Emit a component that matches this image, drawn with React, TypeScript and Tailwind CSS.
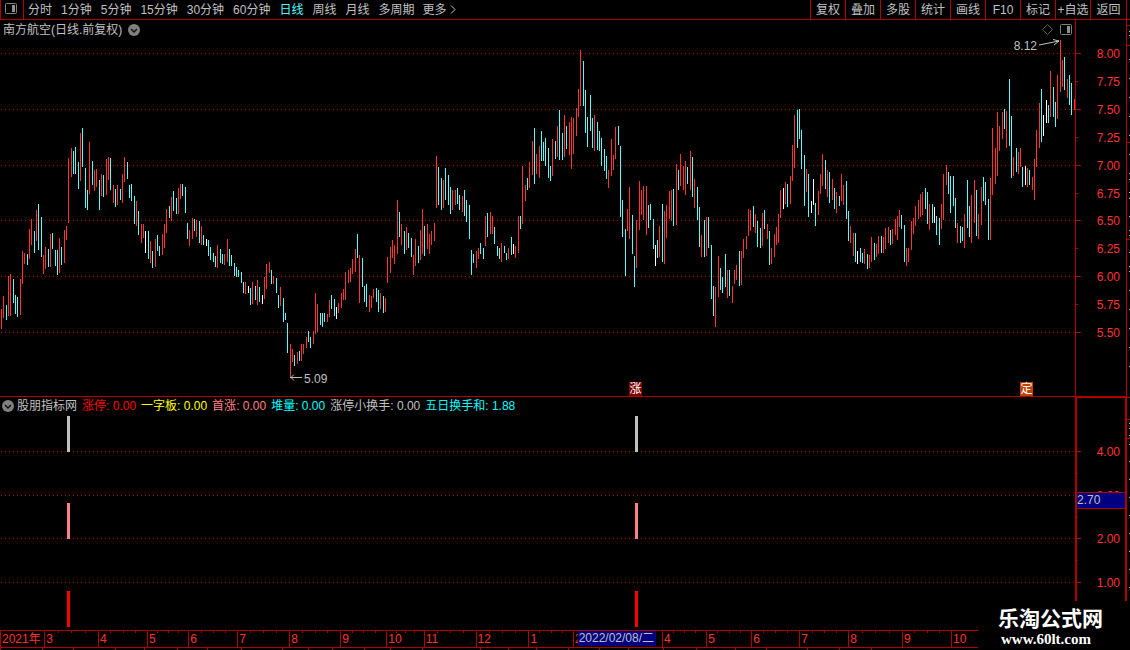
import React from 'react';

const PERIODS = ['分时', '1分钟', '5分钟', '15分钟', '30分钟', '60分钟', '日线', '周线', '月线', '多周期'];
const TOOLS = ['复权', '叠加', '多股', '统计', '画线', 'F10', '标记', '+自选', '返回'];

const CHART_WIDTH = 1075;

// colour, x, high, low
const CANDLES = `
r 1 309 329|r 3 296 318|c 6 305 320|r 8 276 316|r 10 274 316|c 13 279 303|c 15 295 314|c 17 297 317|r 20 279 315
r 22 251 284|r 24 253 264|c 27 254 265|r 29 229 259|r 31 219 245|c 34 231 253|r 36 210 241|c 38 204 250|c 41 217 257
r 43 255 274|r 45 247 269|c 48 249 267|r 50 234 267|c 52 233 249|c 55 250 266|c 57 250 275|r 59 238 273|c 61 247 265
r 64 230 263|r 66 226 240|r 68 158 223|r 71 148 177|c 73 151 174|c 75 147 174|c 78 162 189|r 80 133 181|c 82 128 167
c 85 168 208|c 87 190 210|r 89 142 194|c 92 161 185|r 94 170 191|r 96 169 187|c 99 180 210|r 101 174 196|c 103 175 197
r 106 159 195|r 108 157 180|c 110 158 190|r 113 185 203|c 115 189 207|r 117 185 205|c 120 189 200|r 122 174 203
r 124 157 182|c 127 162 179|c 129 185 198|c 131 184 201|c 134 196 224|r 136 201 226|c 138 211 235|r 141 224 243
r 143 224 238|w 145 231 253|c 148 231 259|r 150 241 263|c 152 251 268|r 155 239 267|c 157 235 251|c 159 246 256
r 162 234 255|r 164 224 248|r 166 209 233|c 169 206 218|r 171 197 221|c 173 191 211|c 176 198 214|r 178 188 214
r 180 184 199|c 182 184 196|c 185 187 213|c 187 223 239|r 189 230 246|r 192 218 239|c 194 219 231|r 196 220 237
c 199 221 243|r 201 226 245|c 203 235 245|w 206 239 246|c 208 240 256|c 210 247 260|c 213 253 262|c 215 256 267
r 217 245 268|c 220 249 263|c 222 254 264|r 224 254 265|r 227 239 262|c 229 249 266|c 231 255 266|c 234 263 276
c 236 267 277|c 238 270 277|c 241 272 283|c 243 282 293|r 245 282 294|w 248 286 293|c 250 288 305|r 252 282 304
c 255 286 300|r 257 280 305|c 259 287 302|w 262 295 304|r 264 277 299|r 266 264 289|r 269 262 273|c 271 270 284
r 273 276 284|c 276 278 293|c 278 295 308|r 280 287 306|c 283 298 322|c 285 313 320|c 287 323 353|r 290 344 377
r 292 349 362|c 294 355 366|r 297 352 364|c 299 351 361|r 301 344 361|r 303 344 354|r 306 337 348|c 308 331 342
c 310 337 348|r 313 331 344|r 315 293 334|r 317 304 332|c 320 313 325|c 322 313 327|c 324 313 322|r 327 314 322
r 329 300 317|c 331 295 309|c 334 299 316|w 336 307 319|r 338 303 313|r 341 293 308|r 343 289 300|r 345 272 300
r 348 270 283|r 350 268 282|r 352 259 274|r 355 249 272|c 357 234 258|r 359 255 303|c 362 258 287|c 364 286 302
c 366 284 307|r 369 295 312|r 371 296 308|r 373 289 298|c 376 288 302|c 378 290 312|r 380 293 309|c 383 296 313
r 385 298 312|r 387 257 283|r 390 247 273|r 392 240 258|r 394 245 264|r 397 200 254|c 399 212 237|r 401 224 245
c 404 231 254|r 406 227 250|c 408 233 248|c 411 238 257|r 413 255 275|r 415 239 266|c 418 246 263|r 420 230 260
r 422 209 254|c 424 226 256|r 427 224 249|r 429 234 254|r 431 231 245|r 434 223 241|r 436 156 208|c 438 167 205
c 441 178 210|r 443 180 208|c 445 168 200|c 448 175 205|c 450 187 214|r 452 190 210|r 455 190 205|c 457 188 204
c 459 195 210|r 462 196 212|c 464 190 216|c 466 200 222|c 469 205 239|c 471 250 275|c 473 254 263|r 476 251 268
r 478 248 259|c 480 243 254|c 483 248 259|r 485 216 246|c 487 213 237|r 490 212 234|r 492 216 234|c 494 227 244
c 497 246 256|c 499 248 259|r 501 243 262|c 504 246 253|c 506 253 260|r 508 248 259|c 511 237 255|w 513 244 254
r 515 246 258|r 518 216 253|c 520 216 229|r 522 166 224|r 525 185 201|c 527 178 190|r 529 162 188|r 532 141 175
c 534 128 184|r 536 154 174|r 539 146 178|c 541 131 161|c 543 142 161|c 545 138 166|c 548 148 178|c 550 166 181
r 552 139 176|c 555 141 159|r 557 126 157|c 559 110 160|c 562 133 160|r 564 115 157|c 566 126 149|r 569 122 155
r 571 117 169|r 573 118 154|r 576 108 136|r 578 89 117|r 580 50 106|c 583 61 106|c 585 90 133|c 587 117 147
c 590 95 131|c 592 118 148|r 594 115 151|c 597 122 150|c 599 131 151|c 601 138 166|c 604 149 171|c 606 156 179
r 608 170 188|r 611 139 176|r 613 155 170|r 615 127 159|c 618 126 145|c 620 146 217|c 622 200 237|c 625 229 276
r 627 209 231|r 629 187 239|c 632 215 254|c 634 256 287|r 636 220 268|r 639 181 230|r 641 190 215|r 643 186 220
r 646 186 235|c 648 205 228|c 650 204 220|c 653 219 249|w 655 245 266|c 657 240 258|r 659 226 257|c 662 204 262
r 664 211 264|r 666 205 238|r 669 191 219|r 671 190 221|c 673 189 226|r 676 164 225|c 678 170 190|r 680 154 186
r 683 166 190|r 685 161 195|c 687 167 184|r 690 151 190|c 692 157 197|r 694 179 208|c 697 187 220|c 699 207 247
r 701 235 257|c 704 220 257|r 706 217 256|c 708 217 248|c 711 245 299|c 713 286 316|r 715 287 327|r 718 256 297
c 720 268 290|c 722 277 293|c 725 254 287|r 727 270 298|c 729 270 296|r 732 286 303|r 734 270 284|r 736 265 280
c 739 251 286|r 741 251 285|r 743 239 258|r 746 236 249|r 748 209 236|r 750 210 231|c 753 206 227|r 755 214 233
c 757 221 247|c 760 228 248|r 762 213 246|c 764 210 229|r 767 224 239|c 769 231 265|r 771 248 264|r 774 234 257
r 776 227 245|r 778 214 243|r 780 190 218|w 783 188 209|r 785 182 204|c 787 184 207|r 790 176 204|r 792 145 181
r 794 115 168|c 797 110 148|c 799 109 139|c 801 130 169|c 804 155 206|r 806 169 192|c 808 174 217|w 811 201 213
w 813 179 205|c 815 203 226|r 818 191 215|r 820 174 194|r 822 154 186|c 825 160 189|r 827 170 197|c 829 172 203
r 832 179 200|c 834 188 209|r 836 192 213|c 839 196 206|r 841 174 201|r 843 185 205|c 846 181 219|c 848 211 241
r 850 226 243|r 853 233 256|c 855 233 262|w 857 251 264|c 860 248 262|c 862 253 263|r 864 249 264|c 867 254 269
r 869 255 268|r 871 237 262|c 874 243 260|r 876 244 257|r 878 236 254|c 881 236 253|r 883 237 253|r 885 228 249
r 888 227 243|c 890 230 245|r 892 229 244|r 895 219 235|r 897 216 240|r 899 210 227|c 901 215 229|c 904 225 262
r 906 248 266|r 908 248 262|r 911 221 250|r 913 218 234|r 915 206 226|r 918 200 219|r 920 194 217|r 922 192 215
c 925 188 209|c 927 192 224|r 929 204 230|c 932 204 223|w 934 207 223|c 936 216 235|c 939 218 245|r 941 204 229
r 943 174 220|r 946 165 185|c 948 172 194|c 950 176 213|c 953 176 206|c 955 198 228|r 957 223 243|c 960 226 243
c 962 227 241|r 964 214 248|c 967 180 228|c 969 206 237|r 971 195 243|r 974 180 223|c 976 190 236|r 978 214 239
r 981 187 225|c 983 177 201|c 985 182 205|c 988 199 240|r 990 178 240|r 992 128 195|r 995 148 184|r 997 112 176
r 999 126 151|r 1002 112 139|c 1004 109 129|r 1006 111 148|c 1009 79 146|c 1011 116 178|r 1013 157 176|c 1016 148 172
r 1018 152 174|r 1020 148 167|c 1022 167 187|w 1025 166 185|r 1027 168 187|c 1029 170 185|r 1032 177 190|r 1034 159 200
r 1036 130 167|r 1039 103 148|c 1041 89 142|w 1043 115 136|w 1046 100 123|c 1048 105 123|r 1050 71 117|c 1053 87 117
c 1055 102 127|r 1057 75 119|r 1060 40 92|r 1062 60 87|c 1064 57 90|r 1067 79 98|c 1069 75 105|c 1071 83 115|r 1074 99 110`
  .trim()
  .split(/[|\n]/)
  .map((row) => {
    const [kind, x, high, low] = row.split(' ');
    return { kind, x: Number(x), high: Number(high), low: Number(low) };
  });

const CANDLE_COLORS: Record<string, string> = { r: '#ff3232', c: '#54fcfc', w: '#ffffff' };

const PRICE_TICKS = [
  { y: 53, label: '8.00', major: true },
  { y: 81, label: '7.75', major: false },
  { y: 109, label: '7.50', major: true },
  { y: 137, label: '7.25', major: false },
  { y: 165, label: '7.00', major: true },
  { y: 193, label: '6.75', major: false },
  { y: 220, label: '6.50', major: true },
  { y: 248, label: '6.25', major: false },
  { y: 276, label: '6.00', major: true },
  { y: 304, label: '5.75', major: false },
  { y: 332, label: '5.50', major: true },
];

const INDICATOR_TICKS = [
  { y: 451, label: '4.00', major: true },
  { y: 473, label: '', major: false },
  { y: 495, label: '3.00', major: true },
  { y: 517, label: '', major: false },
  { y: 538, label: '2.00', major: true },
  { y: 560, label: '', major: false },
  { y: 582, label: '1.00', major: true },
];

const SIGNALS = [
  { y: 416, color: '#c0c0c0' },
  { y: 503, color: '#ff8080' },
  { y: 591, color: '#ff0000' },
];

const READINGS = [
  { name: '涨停', value: '0.00', className: 'text-[#ff0000]' },
  { name: '一字板', value: '0.00', className: 'text-[#ffff00]' },
  { name: '首涨', value: '0.00', className: 'text-[#ff8080]' },
  { name: '堆量', value: '0.00', className: 'text-[#00ffff]' },
  { name: '涨停小换手', value: '0.00', className: 'text-[#c0c0c0]' },
  { name: '五日换手和', value: '1.88', className: 'text-[#00ffff]' },
];

const MONTHS = [
  { label: '2021年', size: 44 },
  { label: '3', size: 54 },
  { label: '4', size: 49 },
  { label: '5', size: 41 },
  { label: '6', size: 49 },
  { label: '7', size: 52 },
  { label: '8', size: 51 },
  { label: '9', size: 46 },
  { label: '10', size: 37 },
  { label: '11', size: 52 },
  { label: '12', size: 53 },
  { label: '1', size: 44 },
  { label: '2', size: 91, selected: '2022/02/08/二' },
  { label: '4', size: 44 },
  { label: '5', size: 45 },
  { label: '6', size: 48 },
  { label: '7', size: 49 },
  { label: '8', size: 54 },
  { label: '9', size: 49 },
  { label: '10', size: 26 },
];

const LOWER_TICKS = [
  0, 42, 73, 115, 144, 177, 207, 241, 282, 308, 332, 364, 390, 422, 480, 508, 536, 568, 599, 628, 663, 696, 735, 766,
  807, 839, 871,
];

const percent = (x: number) => `${(x / CHART_WIDTH) * 100}%`;

function PanelIcon() {
  return (
    <svg width="12" height="11" viewBox="0 0 12 11" fill="none">
      <rect x="0.5" y="0.5" width="11" height="10" rx="1" stroke="#808080" />
      <rect x="7" y="2" width="3" height="7" fill="#909090" />
    </svg>
  );
}

function ChevronBadge() {
  return (
    <svg width="12" height="12" viewBox="0 0 12 12" fill="none">
      <circle cx="6" cy="6" r="6" fill="#808080" />
      <path d="M3 5 L6 8 L9 5" stroke="#101010" strokeWidth="1.5" />
    </svg>
  );
}

function Toolbar() {
  return (
    <header className="flex h-5 justify-between border-b border-[#b00000] pr-[3px]">
      <nav className="flex items-stretch">
        <button aria-label="面板" className="flex w-6 items-center justify-center border-x border-[#b00000] pr-0.5 pb-0.5">
          <PanelIcon />
        </button>
        <div className="flex items-center gap-[9px] pl-1">
          {PERIODS.map((period) => (
            <button key={period} className={period === '日线' ? 'text-[#54fcfc]' : ''}>
              {period}
            </button>
          ))}
          <button className="-ml-px flex items-center gap-[3px]">
            更多
            <svg width="6" height="9" viewBox="0 0 6 9" fill="none">
              <path d="M1 0.5 L5 4.5 L1 8.5" stroke="#c0c0c0" />
            </svg>
          </button>
        </div>
      </nav>
      <nav className="flex items-stretch border-r border-[#b00000]">
        {TOOLS.map((tool) => (
          <button
            key={tool}
            className="flex w-[35px] items-center justify-center border-l border-[#b00000] whitespace-nowrap last:w-9"
          >
            {tool}
          </button>
        ))}
      </nav>
    </header>
  );
}

interface Tick {
  y: number;
  label: string;
  major: boolean;
}

function GridLines({ ticks }: { ticks: Tick[] }) {
  return (
    <>
      {ticks
        .filter((tick) => tick.major)
        .map((tick) => (
          <line
            key={tick.y}
            x1={1}
            x2={CHART_WIDTH}
            y1={tick.y + 0.5}
            y2={tick.y + 0.5}
            stroke="#b00000"
            strokeDasharray="1 3"
          />
        ))}
    </>
  );
}

function Scale({ ticks, top, height, heavy }: { ticks: Tick[]; top: number; height: number; heavy?: boolean }) {
  const line = heavy ? 2 : 1;
  return (
    <svg width="52" height={height} viewBox={`0 ${top} 52 ${height}`} shapeRendering="crispEdges" className="block shrink-0">
      <g fill="#b00000">
        <rect x={0} y={top} width={line} height={height} />
        <rect x={52 - line} y={top} width={line} height={height} />
        {heavy && <rect x={0} y={top} width={52} height={2} />}
        {ticks.map((tick) => (
          <rect key={tick.y} x={0} y={tick.y} width={tick.major ? 6 : 3} height={1} />
        ))}
      </g>
      <g fill="#ff3232" fontSize="12" textAnchor="end">
        {ticks.map((tick) => (
          <text key={tick.y} x={45} y={tick.y + 5}>
            {tick.label}
          </text>
        ))}
      </g>
    </svg>
  );
}

function PricePanel() {
  return (
    <section className="flex">
      <div className="relative min-w-0 flex-1">
        <svg
          viewBox={`0 20 ${CHART_WIDTH} 376`}
          preserveAspectRatio="none"
          shapeRendering="crispEdges"
          className="block h-[376px] w-full"
        >
          <GridLines ticks={PRICE_TICKS} />
          {CANDLES.map((candle) => (
            <rect
              key={candle.x}
              x={candle.x}
              y={candle.high}
              width={1}
              height={candle.low - candle.high}
              fill={CANDLE_COLORS[candle.kind]}
            />
          ))}
        </svg>
        <div className="absolute top-0 left-[3px] flex h-[19px] items-center gap-1.5">
          <h1>南方航空(日线.前复权)</h1>
          <button aria-label="展开">
            <ChevronBadge />
          </button>
        </div>
        <div className="absolute top-1 right-[3px] flex items-center gap-[7px]">
          <svg width="11" height="11" viewBox="0 0 11 11" fill="none">
            <path d="M5.5 0.5 L10.5 5.5 L5.5 10.5 L0.5 5.5 Z" stroke="#606060" />
          </svg>
          <button aria-label="侧栏">
            <PanelIcon />
          </button>
        </div>
        <div className="absolute top-[18px] right-[15px] flex items-center gap-0.5">
          <span>8.12</span>
          <svg width="21" height="8" viewBox="0 0 21 8" fill="none" stroke="#c0c0c0" className="mb-1.5">
            <path d="M0 6 L20 2 M14 0.5 L20 2 L15 6" />
          </svg>
        </div>
        <div className="absolute top-[351px] flex items-center gap-0.5" style={{ left: percent(290) }}>
          <svg width="12" height="8" viewBox="0 0 12 8" fill="none" stroke="#c0c0c0" className="mb-0.5">
            <path d="M12 3.5 L0 3.5 M4 0.5 L1 3.5 L4 6.5" />
          </svg>
          <span>5.09</span>
        </div>
        <span
          className="absolute bottom-0 h-3.5 w-[13px] bg-[#800000] text-center leading-[14px] text-white"
          style={{ left: percent(629) }}
        >
          涨
        </span>
        <span
          className="absolute bottom-0 h-3.5 w-[13px] bg-[#c04000] text-center leading-[14px] text-white"
          style={{ left: percent(1020) }}
        >
          定
        </span>
      </div>
      <Scale ticks={PRICE_TICKS} top={20} height={376} />
    </section>
  );
}

function IndicatorPanel() {
  return (
    <section className="flex">
      <div className="relative min-w-0 flex-1 border-t border-[#b00000]">
        <svg
          viewBox={`0 397 ${CHART_WIDTH} 233`}
          preserveAspectRatio="none"
          shapeRendering="crispEdges"
          className="block h-[233px] w-full"
        >
          <GridLines ticks={INDICATOR_TICKS} />
          {SIGNALS.map((signal) => (
            <g key={signal.y} fill={signal.color}>
              <rect x={67} y={signal.y} width={3} height={36} />
              <rect x={635} y={signal.y} width={3} height={36} />
            </g>
          ))}
        </svg>
        <div className="absolute top-0 left-0.5 flex h-[17px] items-center gap-[5px] whitespace-nowrap">
          <button aria-label="指标" className="-mr-0.5">
            <ChevronBadge />
          </button>
          <h2>股朋指标网</h2>
          {READINGS.map((reading) => (
            <span key={reading.name} className={reading.className}>
              {reading.name}: {reading.value}
            </span>
          ))}
        </div>
      </div>
      <div className="relative shrink-0">
        <Scale ticks={INDICATOR_TICKS} top={396} height={234} heavy />
        <span className="absolute top-24 left-0.5 h-[17px] w-12 border-y border-[#b00000] bg-[#000080] leading-[15px]">
          2.70
        </span>
      </div>
    </section>
  );
}

function DateAxis() {
  return (
    <footer className="flex-1 border-t border-[#b00000] pr-[152px]">
      <div className="flex h-4 text-[#ff3232]">
        {MONTHS.map((month, index) => (
          <div
            key={index}
            className="relative flex min-w-0 overflow-hidden border-l border-[#b00000] pl-px leading-4 whitespace-nowrap"
            style={{ flex: `${month.size} 1 0px` }}
          >
            {month.selected ? (
              <>
                <span className="w-[3px] overflow-hidden">{month.label}</span>
                <time className="z-10 h-[15px] w-[78px] bg-[#000080] pl-px leading-[15px] text-[#c0c0c0]">
                  {month.selected}
                </time>
              </>
            ) : (
              <span>{month.label}</span>
            )}
            {index > 0 && index < MONTHS.length - 1 && (
              <div className="absolute inset-x-0 top-0 flex h-0.5 justify-evenly">
                <i className="w-px bg-[#b00000]" />
                <i className="w-px bg-[#b00000]" />
                <i className="w-px bg-[#b00000]" />
              </div>
            )}
          </div>
        ))}
      </div>
      <svg
        viewBox="0 646 978 4"
        preserveAspectRatio="none"
        shapeRendering="crispEdges"
        className="block h-1 w-full"
        fill="#b00000"
      >
        <rect x={0} y={646} width={978} height={1} />
        {LOWER_TICKS.map((x) => (
          <rect key={x} x={x} y={647} width={1} height={3} />
        ))}
        <path d="M8 649h2v1h-2z M12 649h2v1h-2z M16 649h1v1h-1z M20 649h1v1h-1z M51 649h1v1h-1z M828 649h1v1h-1z" fill="#c0c0c0" />
        <path d="M845 649h1v1h-1z M849 649h4v1h-4z M857 649h9v1h-9z" fill="#54fcfc" />
      </svg>
    </footer>
  );
}

// sliver of the neighbouring quote list along the right edge
function EdgeStrip() {
  const rules = [25, 45, 142, 239, 397, 419, 438];
  const marks = [31, 35, 59, 78, 97, 116, 135, 154, 173, 179, 192, 198, 216, 230, 235, 252, 266, 271, 290, 309, 328, 347, 366];
  const lowerMarks = [423, 428, 435, 444, 461, 479, 497, 515, 533, 551, 569, 587];
  return (
    <svg width="3" height="610" viewBox="0 20 3 610" shapeRendering="crispEdges" className="block shrink-0">
      {rules.map((y) => (
        <rect key={y} x={0} y={y} width={3} height={1} fill="#b00000" />
      ))}
      {[...marks, ...lowerMarks].map((y) => (
        <rect key={y} x={2} y={y} width={1} height={1} fill="#c0c0c0" />
      ))}
    </svg>
  );
}

export default function App() {
  return (
    <div className="relative flex min-h-screen flex-col bg-black font-['Liberation_Sans','Noto_Sans_CJK_SC',sans-serif] text-xs text-[#c0c0c0]">
      <Toolbar />
      <main className="flex">
        <div className="min-w-0 flex-1">
          <PricePanel />
          <IndicatorPanel />
        </div>
        <EdgeStrip />
      </main>
      <DateAxis />
      <div className="absolute right-0 bottom-0 flex h-[50px] w-[152px] flex-col bg-black pt-1.5 pl-5 text-white">
        <strong className="text-[21px] leading-6">乐淘公式网</strong>
        <a href="#" className="pl-[3px] font-['Liberation_Serif',serif] text-[15px] leading-4 font-bold">
          www.60lt.com
        </a>
      </div>
    </div>
  );
}
